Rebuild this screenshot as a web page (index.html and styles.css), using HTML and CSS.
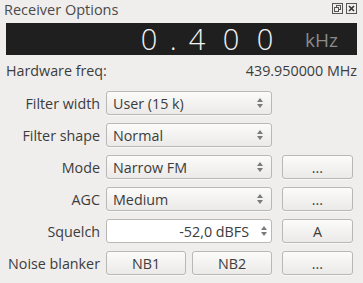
FILE: index.html
```html
<!DOCTYPE html>
<html>
<head>
<meta charset="utf-8">
<link rel="stylesheet" href="styles.css">
</head>
<body>
<div class="panel">
  <div class="titlebar">
    <span class="title">Receiver Options</span>
    <span class="tb-icons">
      <svg width="11" height="11" viewBox="0 0 11 11"><rect x="0.5" y="0.5" width="10" height="10" fill="none" stroke="#555" stroke-width="1"/><rect x="4.5" y="2.5" width="4" height="4" fill="none" stroke="#555"/><rect x="2.5" y="4.5" width="4" height="4" fill="#efeeec" stroke="#555"/></svg>
      <svg width="11" height="11" viewBox="0 0 11 11"><rect x="0.5" y="0.5" width="10" height="10" fill="none" stroke="#555" stroke-width="1"/><path d="M3 3 L8 8 M8 3 L3 8" stroke="#333" stroke-width="1.6"/></svg>
    </span>
  </div>
  <div class="lcd">
    <span class="digit">0</span><span class="digit dot">.</span><span class="digit">4</span><span class="digit">0</span><span class="digit">0</span>
    <span class="unit">kHz</span>
  </div>
  <div class="hw">
    <span>Hardware freq:</span>
    <span>439.950000 MHz</span>
  </div>
  <div class="form">
    <label>Filter width</label>
    <div class="combo"><span>User (15 k)</span><span class="arrows"></span></div>
    <div></div>

    <label>Filter shape</label>
    <div class="combo"><span>Normal</span><span class="arrows"></span></div>
    <div></div>

    <label>Mode</label>
    <div class="combo"><span>Narrow FM</span><span class="arrows"></span></div>
    <div class="btn">...</div>

    <label>AGC</label>
    <div class="combo"><span>Medium</span><span class="arrows"></span></div>
    <div class="btn">...</div>

    <label>Squelch</label>
    <div class="spin"><span class="val">-52,0 dBFS</span><span class="spinarrows"><span class="arrows"></span></span></div>
    <div class="btn">A</div>

    <label>Noise blanker</label>
    <div class="pair"><div class="btn">NB1</div><div class="btn">NB2</div></div>
    <div class="btn">...</div>
  </div>
</div>
</body>
</html>
```

FILE: styles.css
```css
html, body {
  margin: 0;
  padding: 0;
  background: #efeeec;
}
body {
  width: 363px;
  height: 283px;
  overflow: hidden;
  font-family: "Open Sans", "Noto Sans", sans-serif;
  font-size: 14.3px;
  color: #3c3c3c;
}
.panel {
  display: flex;
  flex-direction: column;
}
.titlebar {
  height: 21px;
  display: flex;
  align-items: center;
  justify-content: space-between;
  padding: 0 6px 0 4px;
}
.title {
  font-size: 14.5px;
  color: #4a4a4a;
  margin-top: -3px;
}
.tb-icons {
  display: flex;
  gap: 3px;
  margin-top: -4px;
}
.tb-icons svg {
  display: block;
}
.lcd {
  margin: 2px 6px 0 6px;
  height: 32px;
  background: #1f1f1f;
  display: flex;
  align-items: center;
  justify-content: flex-end;
  padding-right: 19px;
}
.digit {
  width: 34px;
  text-align: center;
  color: #f2f2f2;
  font-family: "Open Sans", sans-serif;
  font-weight: 300;
  font-size: 29px;
  line-height: 32px;
}
.digit.dot {
  width: 14px;
}
.unit {
  color: #8a8a8a;
  font-size: 19px;
  margin-left: 23px;
  margin-top: 1px;
}
.hw {
  display: flex;
  justify-content: space-between;
  padding: 0 6px;
  margin-top: 6px;
  height: 18px;
  align-items: center;
}
.form {
  display: grid;
  grid-template-columns: 100px 166px 75px;
  column-gap: 6px;
  row-gap: 8px;
  margin-top: 12px;
  grid-auto-rows: 24px;
}
.form > :nth-child(3n) {
  margin-left: 4px;
}
.form label {
  display: flex;
  align-items: center;
  justify-content: flex-end;
}
.combo, .btn {
  box-sizing: border-box;
  border: 1px solid #b9b8b6;
  border-radius: 3px;
  background: linear-gradient(#fbfbfa, #ebeae8);
  box-shadow: 0 1px 0 rgba(255,255,255,0.6);
}
.combo {
  display: flex;
  align-items: center;
  justify-content: space-between;
  padding: 0 7px 0 6px;
}
.btn {
  display: flex;
  align-items: center;
  justify-content: center;
}
.arrows {
  width: 7px;
  height: 12px;
  position: relative;
  display: block;
}
.arrows::before, .arrows::after {
  content: "";
  position: absolute;
  left: 0;
  border-left: 3.5px solid transparent;
  border-right: 3.5px solid transparent;
}
.arrows::before {
  top: 1px;
  border-bottom: 4px solid #7a7a7a;
}
.arrows::after {
  bottom: 1px;
  border-top: 4px solid #7a7a7a;
}
.spin {
  box-sizing: border-box;
  border: 1px solid #b9b8b6;
  border-radius: 3px;
  background: #ffffff;
  display: flex;
  align-items: stretch;
}
.spin .val {
  flex: 1;
  display: flex;
  align-items: center;
  justify-content: flex-end;
  padding-right: 8px;
}
.spinarrows {
  width: 14px;
  display: flex;
  align-items: center;
  justify-content: center;
}
.pair {
  display: grid;
  grid-template-columns: 1fr 1fr;
  column-gap: 6px;
}
```
